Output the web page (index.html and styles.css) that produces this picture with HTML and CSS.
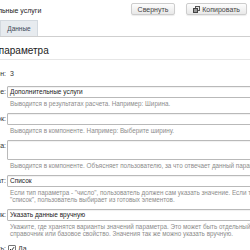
FILE: index.html
```html
<!DOCTYPE html>
<html>

<head>
    <meta charset="utf-8">
    <link rel="stylesheet" href="styles.css">
</head>

<body>
    <div class="page">
        <div class="topbar">
            <div class="title">Дополнительные услуги</div>
            <div class="actions">
                <button class="btn">Свернуть</button>
                <button class="btn">
                    <svg class="btn-icon" width="7" height="7" viewBox="0 0 7 7">
                        <rect x="2.5" y="0.5" width="4" height="4" fill="#e8e8e8" stroke="#555"/>
                        <rect x="0.5" y="2.5" width="4" height="4" fill="#999" stroke="#444"/>
                    </svg>
                    Копировать
                </button>
            </div>
        </div>

        <div class="tabs">
            <div class="tab">Данные</div>
        </div>

        <h2 class="section-title">Настройки параметра</h2>

        <div class="form">
            <div class="label">Связанный шаблон:</div>
            <div class="value">3</div>

            <div class="label">Название:</div>
            <div class="field">
                <div class="input">Дополнительные услуги</div>
                <div class="hint">Выводится в результатах расчета. Например: Ширина.</div>
            </div>

            <div class="label">Подзаголовок:</div>
            <div class="field">
                <div class="input"></div>
                <div class="hint">Выводится в компоненте. Например: Выберите ширину.</div>
            </div>

            <div class="label">Подсказка:</div>
            <div class="field">
                <div class="input textarea"></div>
                <div class="hint">Выводится в компоненте. Объясняет пользователю, за что отвечает данный параметр.</div>
            </div>

            <div class="label">Формат:</div>
            <div class="field">
                <div class="input">Список</div>
                <div class="hint">Если тип параметра - "число", пользователь должен сам указать значение. Если тип параметра -<br>"список", пользователь выбирает из готовых элементов.</div>
            </div>

            <div class="label">Источник:</div>
            <div class="field">
                <div class="input">Указать данные вручную</div>
                <div class="hint">Укажите, где хранятся варианты значений параметра. Это может быть отдельный инфоблок,<br>справочник или базовое свойство. Значения так же можно указать вручную.</div>
            </div>

            <div class="label">Активность:</div>
            <div class="value check-row">
                <span class="checkbox">
                    <svg width="6" height="6" viewBox="0 0 6 6">
                        <path d="M1 3 L2.5 4.5 L5 1.2" fill="none" stroke="#333" stroke-width="1"/>
                    </svg>
                </span>
                Да
            </div>
        </div>
    </div>
</body>

</html>
```

FILE: styles.css
```css
body {
    margin: 0;
    width: 250px;
    height: 250px;
    overflow: hidden;
    background-color: #fff;
    color: #333;
    font-family: "Liberation Sans", Arial, sans-serif;
}

.topbar {
    display: flex;
    justify-content: space-between;
    align-items: center;
    height: 20px;
    padding-right: 3px;
}

.title {
    margin-left: -37px;
    font-size: 7px;
    white-space: nowrap;
    color: #222;
}

.actions {
    display: flex;
    gap: 11px;
    margin-top: -2px;
}

.btn {
    display: flex;
    align-items: center;
    gap: 2px;
    height: 12px;
    padding: 0 6px;
    border: 1px solid #cdcdcd;
    border-radius: 2px;
    background: linear-gradient(#fdfdfd, #e8e8e8);
    box-shadow: 0 1px 1px rgba(0, 0, 0, 0.08);
    font-family: "Liberation Sans", Arial, sans-serif;
    font-size: 7px;
    color: #444;
}

.btn-icon {
    display: block;
}

.tabs {
    height: 16px;
    border-bottom: 1px solid #cfcfcf;
}

.tab {
    width: 38px;
    height: 16px;
    box-sizing: border-box;
    border: 1px solid #d3d9df;
    border-bottom: none;
    background-color: #e7ebef;
    text-align: center;
    line-height: 16px;
    font-size: 6.5px;
    color: #3d4a57;
}

.section-title {
    margin: 0 0 0 -53px;
    padding: 8px 0 2px;
    border-bottom: 1px solid #e6e6e6;
    font-size: 10px;
    line-height: 12px;
    font-weight: normal;
    color: #222;
    white-space: nowrap;
}

.form {
    display: grid;
    grid-template-columns: 120px 400px;
    column-gap: 1px;
    row-gap: 6px;
    margin-left: -114px;
    padding-top: 8px;
}

.label {
    text-align: right;
    font-size: 7px;
    line-height: 12px;
    white-space: nowrap;
    color: #333;
}

.value {
    padding-left: 3px;
    font-size: 7px;
    line-height: 12px;
}

.input {
    height: 12px;
    box-sizing: border-box;
    padding: 0 2px;
    border: 1px solid #b9b9b9;
    border-radius: 1px;
    box-shadow: inset 0 1px 1px rgba(0, 0, 0, 0.06);
    font-size: 6.5px;
    line-height: 10px;
    color: #222;
}

.textarea {
    height: 20px;
}

.hint {
    margin-top: 2px;
    padding-left: 3px;
    font-size: 6.3px;
    line-height: 7px;
    color: #8c8c8c;
    white-space: nowrap;
}

.check-row {
    display: flex;
    align-items: center;
    gap: 2px;
    padding-left: 1px;
}

.checkbox {
    display: flex;
    align-items: center;
    justify-content: center;
    width: 6px;
    height: 6px;
    border: 1px solid #777;
    border-radius: 1px;
    background-color: #fff;
}
```
